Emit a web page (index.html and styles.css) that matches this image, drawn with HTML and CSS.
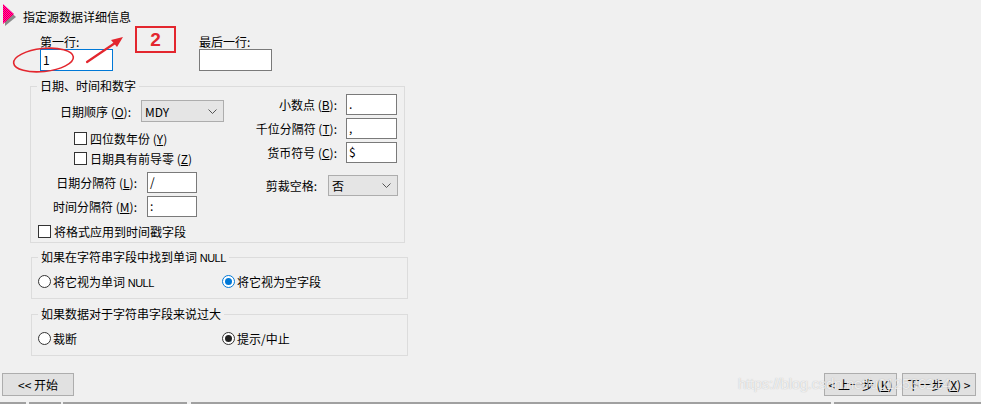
FILE: index.html
```html
<!DOCTYPE html>
<html lang="zh">
<head>
<meta charset="utf-8">
<link rel="stylesheet" href="styles.css">
</head>
<body>
<div class="page">
  <div class="title">
    <svg class="tri" width="13" height="22" viewBox="0 0 13 22">
      <defs>
        <pattern id="dith" width="2" height="2" patternUnits="userSpaceOnUse">
          <rect width="2" height="2" fill="#ff0033"/>
          <rect width="1" height="1" fill="#ff00cc"/>
          <rect x="1" y="1" width="1" height="1" fill="#ff00cc"/>
        </pattern>
      </defs>
      <polygon points="2,3 13,13 2,22" fill="#8a8a8a"/>
      <polygon points="0,0 11,10 0,20" fill="url(#dith)"/>
    </svg>
    <span class="title-text">指定源数据详细信息</span>
  </div>

  <div class="rows">
    <div class="rowfield">
      <div class="lbl">第一行:</div>
      <div class="input focus">1</div>
    </div>
    <div class="rowfield">
      <div class="lbl">最后一行:</div>
      <div class="input"></div>
    </div>
  </div>

  <fieldset class="group g1">
    <legend>日期、时间和数字</legend>
    <div class="cols">
      <div class="left">
        <div class="frow r-order">
          <span class="flabel w100">日期顺序 (<u>O</u>):</span>
          <div class="select s-order"><span>MDY</span><svg class="chev" width="9" height="5" viewBox="0 0 9 5"><polyline points="0.5,0.5 4.5,4.5 8.5,0.5" fill="none" stroke="#555" stroke-width="1"/></svg></div>
        </div>
        <div class="cbrows">
          <div class="cb"><span class="box"></span><span>四位数年份 (<u>Y</u>)</span></div>
          <div class="cb"><span class="box"></span><span>日期具有前导零 (<u>Z</u>)</span></div>
        </div>
        <div class="frow r-sep1">
          <span class="flabel w106">日期分隔符 (<u>L</u>):</span>
          <div class="input small">/</div>
        </div>
        <div class="frow r-sep2">
          <span class="flabel w106">时间分隔符 (<u>M</u>):</span>
          <div class="input small">:</div>
        </div>
      </div>
      <div class="right">
        <div class="rrow">
          <span class="flabel">小数点 (<u>B</u>):</span>
          <div class="input small r">.</div>
        </div>
        <div class="rrow">
          <span class="flabel">千位分隔符 (<u>T</u>):</span>
          <div class="input small r">,</div>
        </div>
        <div class="rrow">
          <span class="flabel">货币符号 (<u>C</u>):</span>
          <div class="input small r">$</div>
        </div>
        <div class="rrow trim">
          <span class="flabel">剪裁空格:</span>
          <div class="select s-trim"><span>否</span><svg class="chev" width="9" height="5" viewBox="0 0 9 5"><polyline points="0.5,0.5 4.5,4.5 8.5,0.5" fill="none" stroke="#555" stroke-width="1"/></svg></div>
        </div>
      </div>
    </div>
    <div class="cb full"><span class="box"></span><span>将格式应用到时间戳字段</span></div>
  </fieldset>

  <fieldset class="group g2">
    <legend>如果在字符串字段中找到单词 <span class="latin">NULL</span></legend>
    <div class="radios">
      <div class="radio"><span class="circ"></span><span>将它视为单词 <span class="latin">NULL</span></span></div>
      <div class="radio"><span class="circ on blue"></span><span>将它视为空字段</span></div>
    </div>
  </fieldset>

  <fieldset class="group g3">
    <legend>如果数据对于字符串字段来说过大</legend>
    <div class="radios">
      <div class="radio"><span class="circ"></span><span>裁断</span></div>
      <div class="radio"><span class="circ on dark"></span><span>提示/中止</span></div>
    </div>
  </fieldset>

  <div class="footer">
    <div class="buttons">
      <div class="btn b-start">&lt;&lt; 开始</div>
      <div class="spacer"></div>
      <div class="btn b-prev">&lt; 上一步 (<u>K</u>)</div>
      <div class="btn b-next">下一步 (<u>X</u>) &gt;</div>
    </div>
    <div class="strip">
      <span class="seg s1"></span><span class="seg s2"></span><span class="seg s3"></span><span class="seg s4"></span><span class="seg s5"></span>
    </div>
  </div>

  <svg class="annot" width="200" height="80" viewBox="0 0 200 80">
    <ellipse cx="43.5" cy="60" rx="30" ry="11.5" transform="rotate(-6 43.5 60)" fill="none" stroke="#e3262e" stroke-width="1.6"/>
    <line x1="87" y1="62" x2="118" y2="41" stroke="#e3262e" stroke-width="2.2" stroke-linecap="round"/>
    <polygon points="123,37 111,40 117,47" fill="#e3262e"/>
  </svg>
  <div class="badge">2</div>
  <div class="watermark">https://blog.csdn.net/u012536214</div>
</div>
</body>
</html>
```
FILE: styles.css
```css
html, body {
  margin: 0;
  padding: 0;
}
body {
  background: #f0f0f0;
  font-family: "Noto Sans CJK SC", "Noto Sans", sans-serif;
  font-size: 12px;
  color: #000;
}
.page {
  position: relative;
  width: 981px;
  height: 404px;
  display: flex;
  flex-direction: column;
  overflow: hidden;
}
.title {
  display: flex;
  align-items: flex-start;
  height: 22px;
  margin-top: 4px;
  padding-left: 3px;
}
.tri {
  display: block;
  flex: none;
}
.title-text {
  margin-left: 7px;
  line-height: 22px;
  padding-top: 2px;
}
.rows {
  display: flex;
  margin-left: 40px;
  margin-top: 8px;
  gap: 86px;
}
.lbl {
  height: 15px;
  line-height: 15px;
}
.input {
  box-sizing: border-box;
  background: #fff;
  border: 1px solid #7a7a7a;
  width: 73px;
  height: 22px;
  line-height: 19px;
  padding-left: 2px;
  font-size: 12px;
}
.input.focus {
  border-color: #0078d7;
}
.input.small {
  width: 50px;
  height: 21px;
  line-height: 18px;
}
.input.r {
  width: 51px;
}
.group {
  box-sizing: border-box;
  margin: 0;
  padding: 0;
  border: 1px solid #dcdcdc;
  min-inline-size: 0;
}
.group legend {
  margin-left: 6px;
  padding: 0 3px;
  line-height: 16px;
  height: 16px;
}
.g1 {
  margin-left: 30px;
  width: 375px;
  margin-top: 7px;
  padding-bottom: 1px;
}
.g2, .g3 {
  margin-left: 31px;
  width: 377px;
  padding-bottom: 7px;
}
.g2 {
  margin-top: 6px;
}
.g3 {
  margin-top: 7px;
}
.cols {
  display: grid;
  grid-template-columns: 200px 1fr;
}
.frow {
  display: flex;
  align-items: center;
  gap: 10px;
}
.flabel {
  white-space: nowrap;
}
.w100 {
  width: 100px;
  text-align: right;
}
.w106 {
  width: 106px;
  text-align: right;
}
.r-order {
  margin-top: 6px;
  height: 22px;
}
.r-sep1 {
  margin-top: 4px;
}
.r-sep2 {
  margin-top: 3px;
}
.select {
  box-sizing: border-box;
  display: flex;
  align-items: center;
  justify-content: space-between;
  background: #e5e5e5;
  border: 1px solid #adadad;
  padding: 0 6px 0 3px;
  height: 22px;
}
.s-order {
  width: 83px;
}
.s-trim {
  width: 70px;
  height: 21px;
}
.chev {
  display: block;
}
.cbrows {
  margin-top: 6px;
  margin-left: 43px;
}
.cb {
  display: flex;
  align-items: center;
  height: 20px;
  white-space: nowrap;
}
.box {
  box-sizing: border-box;
  width: 13px;
  height: 13px;
  background: #fff;
  border: 1px solid #333;
  margin-right: 3px;
  flex: none;
}
.cb.full {
  margin-left: 7px;
  margin-top: 4px;
}
.right {
  display: flex;
  flex-direction: column;
  align-items: flex-end;
  padding-right: 7px;
}
.rrow {
  display: flex;
  align-items: center;
  gap: 9px;
  height: 21px;
  margin-bottom: 3px;
}
.rrow.trim {
  margin-top: 9px;
  gap: 11px;
  margin-right: -1px;
}
.radios {
  display: grid;
  grid-template-columns: 184px 1fr;
  margin-top: 6px;
  padding-left: 6px;
}
.radio {
  display: flex;
  align-items: center;
  height: 20px;
  white-space: nowrap;
}
.circ {
  box-sizing: border-box;
  width: 13px;
  height: 13px;
  border-radius: 50%;
  border: 1px solid #333;
  background: #fff;
  margin-right: 2px;
  flex: none;
  position: relative;
}
.circ.on::after {
  content: "";
  position: absolute;
  left: 2px;
  top: 2px;
  width: 7px;
  height: 7px;
  border-radius: 50%;
}
.circ.blue {
  border-color: #0078d7;
}
.circ.blue::after {
  background: #0078d7;
}
.circ.dark::after {
  background: #222;
}
.latin {
  font-family: "Liberation Sans", Arial, sans-serif;
  font-size: 11px;
  letter-spacing: -0.5px;
}
.footer {
  margin-top: auto;
}
.buttons {
  display: flex;
  height: 23px;
}
.btn {
  box-sizing: border-box;
  height: 23px;
  line-height: 21px;
  background: #e1e1e1;
  border: 1px solid #adadad;
  text-align: center;
  white-space: nowrap;
}
.b-start {
  margin-left: 2px;
  width: 72px;
}
.spacer {
  flex: 1;
}
.b-prev {
  width: 73px;
}
.b-next {
  width: 74px;
  margin-left: 5px;
  margin-right: 5px;
}
.strip {
  display: flex;
  margin-top: 6px;
  height: 2px;
}
.seg {
  display: block;
  height: 2px;
  background: #a0a0a0;
}
.s1 { width: 26px; }
.s2 { width: 32px; margin-left: 3px; }
.s3 { width: 124px; margin-left: 2px; }
.s4 { width: 640px; margin-left: 4px; }
.s5 { width: 147px; margin-left: 3px; }
.annot {
  position: absolute;
  left: 0;
  top: 0;
  pointer-events: none;
}
.badge {
  position: absolute;
  left: 135px;
  top: 26px;
  box-sizing: border-box;
  width: 41px;
  height: 27px;
  border: 2px solid #e3262e;
  color: #e3262e;
  font-family: "Liberation Sans", Arial, sans-serif;
  font-weight: bold;
  font-size: 19px;
  line-height: 23px;
  text-align: center;
}
.watermark {
  position: absolute;
  left: 738px;
  top: 375px;
  font-family: "Liberation Sans", Arial, sans-serif;
  font-size: 15px;
  letter-spacing: -0.3px;
  color: rgba(255, 255, 255, 0.75);
  text-shadow: 0 0 1px rgba(120, 120, 120, 0.5);
  white-space: nowrap;
  pointer-events: none;
}
```
